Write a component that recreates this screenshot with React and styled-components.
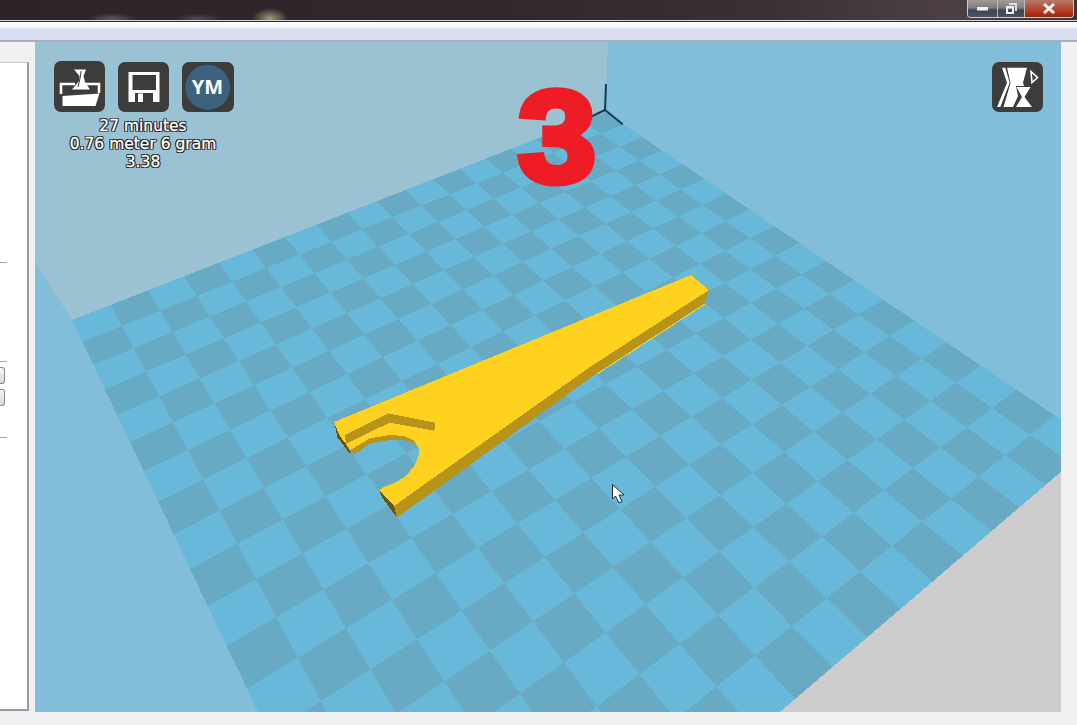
import styled, { createGlobalStyle } from 'styled-components';

const GlobalStyle = createGlobalStyle`
  html, body {
    margin: 0;
    padding: 0;
    height: 100%;
    overflow: hidden;
    background: #f0f0f0;
  }
`;

// floor grid -> screen, fitted from the checker corners
const project = (u, v) => {
  const p = 0.01839 * u;
  const q = -0.0255 * v;
  const w = 1 + p + q;
  return [(72 + p * 2217 - q * 324.7) / w, (320 - p * 516 - q * 516) / w];
};
const toPoints = (pts) => pts.map((pt) => pt.join(',')).join(' ');

const BED = 18;
const darkCells = [];
for (let i = 0; i < BED; i++) {
  for (let j = 0; j < BED; j++) {
    if ((i + j) % 2 === 1) {
      darkCells.push(toPoints([project(i, j), project(i + 1, j), project(i + 1, j + 1), project(i, j + 1)]));
    }
  }
}

// coordinates read off a 3x crop of the fork end
const crop = (pts) => toPoints(pts.map(([x, y]) => [320 + x / 3, 380 + y / 3]));

const modelTop =
  '334,422 691,275 709,290 590,367 470,452 394,506 ' +
  crop([
    [178, 330], [190, 322], [225, 308], [255, 290], [280, 262], [295, 230], [297, 205], [280, 180],
    [250, 168], [210, 165], [150, 175], [92, 210], [78, 192], [60, 170],
  ]);

function Scene() {
  return (
    <SceneSvg viewBox="35 42 1026 670" shapeRendering="crispEdges">
      <rect x="35" y="42" width="1026" height="670" fill="#82bed9" />
      <polygon points="35,42 608,42 605,112 72,320 35,262" fill="#9ac2d3" />
      <polygon points={toPoints([project(0, 0), project(BED, 0), project(BED, BED), project(0, BED)])} fill="#68b8da" />
      {darkCells.map((pts) => (
        <polygon key={pts} points={pts} fill="#68a9c4" />
      ))}
      <polygon points={toPoints([project(0, BED), project(BED, BED), [1400, 1200]])} fill="#cccccc" />

      <g stroke="#0f3d56" strokeWidth="2" shapeRendering="auto">
        <line x1="605" y1="110" x2="606" y2="84" />
        <line x1="605" y1="110" x2="622.7" y2="124.3" />
        <line x1="605" y1="110" x2="589" y2="117.7" />
      </g>

      <line x1="705" y1="304" x2="597" y2="374" stroke="#ffd21f" strokeWidth="1" />
      <polygon points="709,290 705,303 597,373 470,465 397,517.5 394,506 470,452 590,367" fill="#b8931a" />
      <polygon points={crop([[178, 332], [222, 378], [230, 412], [186, 352]])} fill="#6e5210" />
      <polygon points={crop([[222, 378], [480, 190], [480, 225], [230, 412]])} fill="#b8931a" />
      <polygon
        points={crop([
          [92, 210], [150, 175], [210, 165], [250, 168], [280, 180], [297, 205], [285, 190], [250, 180],
          [210, 180], [150, 190], [100, 225],
        ])}
        fill="#b8931a"
      />
      <polygon points={crop([[43, 126], [60, 170], [78, 192], [97, 225], [84, 214], [52, 172]])} fill="#6e5210" />
      <polygon points={modelTop} fill="#ffd21f" />
      <polygon
        points={crop([[75, 165], [205, 100], [345, 128], [343, 152], [208, 128], [78, 192]])}
        fill="#b8931a"
      />

      <path
        d="M612.5 484.5 V499 L615.5 496 L619 503 L622 501.5 L619 495 H624 Z"
        fill="#fff"
        stroke="#1c2a3c"
        strokeWidth="1"
        shapeRendering="auto"
      />
    </SceneSvg>
  );
}

function LoadIcon() {
  return (
    <svg width="51" height="51" viewBox="0 0 51 51">
      <path d="M20 8.5 H32 L29.5 15 L31 21 L36 28.5 H18 L25 20 L25.5 15 Z" fill="#fff" />
      <path d="M27 10 L26.5 15 L24 26" stroke="#3c3c3c" strokeWidth="1" fill="none" />
      <path d="M7 33 V23 H21 M31 23 H45 V32" stroke="#fff" strokeWidth="2.6" fill="none" />
      <path d="M8.5 35 L45.5 32.5 L41.5 45 H8.5 Z" fill="#fff" />
    </svg>
  );
}

function SaveIcon() {
  return (
    <svg width="51" height="50" viewBox="0 0 51 50">
      <path d="M10.5 10 H41.5 V40 H10.5 Z" fill="#fff" />
      <rect x="14.5" y="13" width="23.5" height="15" fill="#3c3c3c" />
      <rect x="17" y="31" width="18" height="9" fill="#3c3c3c" />
      <rect x="20" y="31.5" width="5" height="8.5" fill="#fff" />
    </svg>
  );
}

function ProfileIcon() {
  return (
    <svg width="52" height="50" viewBox="0 0 52 50">
      <circle cx="25.7" cy="25.3" r="22.5" fill="#3d627d" />
      <LogoText x="25.5" y="32" textAnchor="middle">YM</LogoText>
    </svg>
  );
}

function ViewIcon() {
  return (
    <svg width="51" height="50" viewBox="0 0 51 50">
      <path d="M10 5.7 H13.3 L17.7 20.7 L8.3 45 H5 L15 20.7 Z" fill="#fff" />
      <path d="M15 5.7 H35 L31 20.7 L32 24 H24 L26 34 L21 45 H11.5 L18.5 21 Z" fill="#fff" />
      <path d="M24.5 25 H38.5 L32.5 35 L40 45 H24 L30 35 Z" fill="#fff" />
      <path d="M39 9.5 L45.5 15.5 L40 20.5 Z" fill="#3c3c3c" stroke="#fff" strokeWidth="1.6" />
    </svg>
  );
}

export default function App() {
  return (
    <>
      <GlobalStyle />
      <Page>
        <Desktop>
          <WindowButtons>
            <WindowButton $width={29}>
              <svg width="12" height="5"><rect width="11" height="3.5" y="1" fill="#eef1f5" /></svg>
            </WindowButton>
            <WindowButton $width={26}>
              <svg width="13" height="13" viewBox="0 0 13 13">
                <path d="M4 1 H12 V9 H10 V3 H4 Z" fill="#d8dde4" />
                <path d="M1 4 H9 V12 H1 Z M3 6.5 V10 H7 V6.5 Z" fill="#eef1f5" fillRule="evenodd" />
              </svg>
            </WindowButton>
            <WindowButton $width={48} $close>
              <svg width="14" height="11" viewBox="0 0 14 11">
                <path d="M2 1 L12 10 M12 1 L2 10" stroke="#eef1f5" strokeWidth="3" />
              </svg>
            </WindowButton>
          </WindowButtons>
        </Desktop>
        <MenuBand />
        <Body>
          <SideColumn>
            <SettingsPanel>
              <Separator $top={200} />
              <Separator $top={99} />
              <StubButton $top={5} />
              <StubButton $top={5} />
              <Separator $top={32} />
            </SettingsPanel>
          </SideColumn>
          <Canvas>
            <Scene />
            <Step>3</Step>
            <ToolGroup>
              <ToolRow>
                <ToolButton $width={51} $height={51}><LoadIcon /></ToolButton>
                <ToolButton $width={51} $height={50}><SaveIcon /></ToolButton>
                <ToolButton $width={52} $height={50}><ProfileIcon /></ToolButton>
              </ToolRow>
              <PrintInfo>
                <div>27 minutes</div>
                <div>0.76 meter 6 gram</div>
                <div>3.38</div>
              </PrintInfo>
            </ToolGroup>
            <ViewSwitch>
              <ToolButton $width={51} $height={50}><ViewIcon /></ToolButton>
            </ViewSwitch>
          </Canvas>
        </Body>
      </Page>
    </>
  );
}

const Page = styled.div`
  width: 1077px;
  height: 725px;
  display: flex;
  flex-direction: column;
  background: #f0f0f0;
  overflow: hidden;
`;

const Desktop = styled.div`
  position: relative;
  height: 22px;
  flex: none;
  box-sizing: border-box;
  border-bottom: 1px solid #2e2e2e;
  box-shadow: inset 0 -1px 0 #d4d4d4;
  background:
    radial-gradient(ellipse 26px 7px at 112px 20px, #5f5f60, transparent),
    radial-gradient(ellipse 24px 7px at 198px 20px, #5c4a62, transparent),
    radial-gradient(ellipse 18px 11px at 270px 19px, #a09c74, transparent),
    linear-gradient(90deg, #2c2428 0%, #30282c 45%, #3a3034 70%, #4c4044 88%, #3e3438 100%);
`;

const WindowButtons = styled.div`
  position: absolute;
  top: 0;
  right: 3px;
  display: flex;
  height: 17px;
  border: 1px solid #c8ccd0;
  border-top: none;
  border-radius: 0 0 4px 4px;
  overflow: hidden;
`;

const WindowButton = styled.div`
  width: ${(p) => p.$width}px;
  display: flex;
  align-items: center;
  justify-content: center;
  border-right: ${(p) => (p.$close ? 'none' : '1px solid #b8bcc0')};
  background: ${(p) =>
    p.$close
      ? 'linear-gradient(180deg, #b87a68 0%, #b0503c 45%, #c23218 70%, #8a2a18 100%)'
      : 'linear-gradient(180deg, #a09a98 0%, #827e80 45%, #3e4656 60%, #4a5262 100%)'};
`;

const MenuBand = styled.div`
  height: 20px;
  flex: none;
  box-sizing: border-box;
  border-bottom: 2px solid #a9adc0;
  background: linear-gradient(180deg, #ffffff 0%, #f4f6fb 30%, #d9def0 40%, #d9def0 100%);
`;

const Body = styled.div`
  flex: 1;
  display: flex;
  align-items: flex-start;
`;

const SideColumn = styled.div`
  width: 35px;
  flex: none;
  padding-top: 20px;
`;

const SettingsPanel = styled.div`
  width: 29px;
  height: 649px;
  box-sizing: border-box;
  background: #fff;
  border-right: 2px solid #9a98a8;
  border-bottom: 2px solid #9a98a8;
  border-top: 1px solid #c8c8d0;
  overflow: hidden;
`;

const Separator = styled.div`
  width: 7px;
  height: 1px;
  background: #a8a8a8;
  margin-top: ${(p) => p.$top - 1}px;
`;

const StubButton = styled.div`
  width: 5px;
  height: 17px;
  box-sizing: border-box;
  margin-top: ${(p) => p.$top}px;
  border: 1px solid #8a8a8a;
  border-left: none;
  border-radius: 0 3px 3px 0;
  background: linear-gradient(180deg, #f6f6f6, #d8d8d8);
`;

const Canvas = styled.div`
  position: relative;
  width: 1026px;
  height: 670px;
  flex: none;
  overflow: hidden;
`;

const SceneSvg = styled.svg`
  display: block;
  width: 1026px;
  height: 670px;
`;

const Step = styled.div`
  position: absolute;
  left: 483px;
  top: 20px;
  font-family: 'Liberation Sans', sans-serif;
  font-weight: 700;
  font-size: 130px;
  line-height: 150px;
  color: #ee1c25;
  -webkit-text-stroke: 7px #ee1c25;
  transform: scaleX(1.08);
  transform-origin: left center;
`;

const ToolGroup = styled.div`
  position: absolute;
  left: 19px;
  top: 19px;
  display: flex;
  flex-direction: column;
`;

const ToolRow = styled.div`
  display: flex;
  align-items: flex-end;
  gap: 13px;
`;

const ToolButton = styled.div`
  width: ${(p) => p.$width}px;
  height: ${(p) => p.$height}px;
  border-radius: 7px;
  background: #3c3c3c;
  overflow: hidden;
`;

const LogoText = styled.text`
  font-family: 'Open Sans', sans-serif;
  font-weight: 700;
  font-size: 20px;
  fill: #fff;
`;

const PrintInfo = styled.div`
  width: 178px;
  margin-top: 5px;
  text-align: center;
  font-family: 'DejaVu Sans', sans-serif;
  font-size: 15.5px;
  line-height: 18px;
  color: #fff;
  -webkit-text-stroke: 0.3px #fff;
  text-shadow:
    1px 0 0 #222, -1px 0 0 #222, 0 1px 0 #222, 0 -1px 0 #222,
    1px 1px 0 #222, -1px -1px 0 #222, 1px -1px 0 #222, -1px 1px 0 #222;
`;

const ViewSwitch = styled.div`
  position: absolute;
  top: 20px;
  right: 18px;
`;
